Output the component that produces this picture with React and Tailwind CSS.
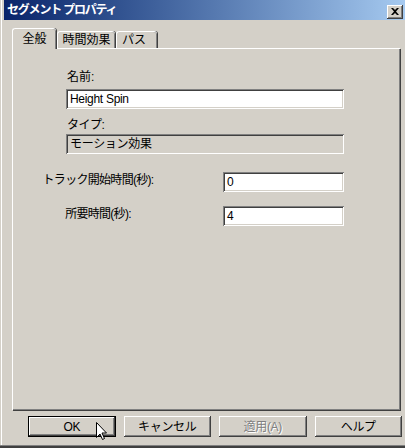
import React from "react";

const sunken =
  "shadow-[inset_1px_1px_0_#808080,inset_-1px_-1px_0_#ffffff,inset_2px_2px_0_#404040,inset_-2px_-2px_0_#d4d0c8]";
const raised =
  "shadow-[inset_-1px_-1px_0_#404040,inset_1px_1px_0_#ffffff,inset_-2px_-2px_0_#808080]";

function Field({ value, disabled, className }) {
  return (
    <div
      className={`h-[20px] ${sunken} ${disabled ? "bg-[#d4d0c8]" : "bg-white"} pl-[4px] flex items-center text-[12px] text-black ${className}`}
    >
      <span className="leading-[14px] tracking-[-0.3px]">{value}</span>
    </div>
  );
}

function Button({ children, def, disabled }) {
  return (
    <div
      className={`w-[88px] h-[21px] flex items-center justify-center text-[12px] ${def ? "border border-black" : ""}`}
    >
      <div className={`w-full h-full flex items-center justify-center ${raised}`}>
        <span
          className={`leading-[14px] tracking-[-0.3px] ${disabled ? "text-[#808080] [text-shadow:1px_1px_0_#ffffff]" : "text-black"}`}
        >
          {children}
        </span>
      </div>
    </div>
  );
}

export default function App() {
  return (
    <div
      className="w-[405px] h-[448px] bg-[#d4d0c8] relative overflow-hidden"
      style={{ fontFamily: '"Liberation Sans", "Noto Sans CJK JP", sans-serif' }}
    >
      <div className="ml-[1px] border-l border-white h-[445px] pl-[2px] flex flex-col">
        {/* Title bar */}
        <div className="h-[20px] bg-gradient-to-r from-[#0a246a] to-[#a6caf0] flex items-center justify-between pl-[3px] pr-[2px]">
          <span className="text-white font-bold text-[12px] leading-[14px] tracking-[-1.2px]">
            セグメント プロパティ
          </span>
          <div className={`w-[16px] h-[14px] bg-[#d4d0c8] ${raised} flex items-center justify-center mt-[3px]`}>
            <svg width="8" height="7" viewBox="0 0 8 7">
              <path d="M0 0h2l2 2 2-2h2L5 3.5 8 7H6L4 5 2 7H0l3-3.5z" fill="#000" />
            </svg>
          </div>
        </div>

        {/* Tabs */}
        <div className="mt-[8px] pl-[8px] pr-[3px] flex flex-col">
          <div className="flex items-end h-[20px] pl-[1px]">
            <div className="relative z-10 w-[44px] h-[21px] -mb-[1px] -ml-[1px] bg-[#d4d0c8] border-l border-t border-white rounded-tl-[3px] rounded-tr-[3px] shadow-[inset_-1px_0_0_#808080,1px_0_0_#404040] flex items-start justify-center pt-[3px] text-[12px] leading-[14px]">
              全般
            </div>
            <div className="w-[58px] h-[17px] ml-[1px] bg-[#d4d0c8] border-l border-t border-white rounded-tl-[3px] rounded-tr-[3px] shadow-[inset_-1px_0_0_#808080,1px_0_0_#404040] flex items-start justify-center pt-[1px] text-[12px] leading-[14px]">
              時間効果
            </div>
            <div className="w-[41px] h-[17px] ml-[1px] bg-[#d4d0c8] border-l border-t border-white rounded-tl-[3px] rounded-tr-[3px] shadow-[inset_-1px_0_0_#808080,1px_0_0_#404040] flex items-start pl-[5px] pt-[1px] text-[12px] leading-[14px]">
              パス
            </div>
          </div>

          {/* Panel */}
          <div className="w-[388px] h-[362px] border-l border-t border-white shadow-[inset_-1px_-1px_0_#808080,1px_1px_0_#404040] flex flex-col pl-[53px] text-[12px] text-black">
            <div className="mt-[21px] pl-[1px] leading-[14px]">名前:</div>
            <Field value="Height Spin" className="w-[278px] mt-[5px]" />
            <div className="mt-[9px] pl-[1px] leading-[14px] tracking-[-0.5px]">タイプ:</div>
            <Field value="モーション効果" disabled className="w-[278px] mt-[2px]" />

            <div className="-ml-[53px] mt-[18px] flex items-start">
              <div className="w-[166px] text-center leading-[14px] pt-[1px] pl-[4px] tracking-[-0.7px]">トラック開始時間(秒):</div>
              <Field value="0" className="w-[121px] ml-[44px]" />
            </div>
            <div className="-ml-[53px] mt-[14px] flex items-start">
              <div className="w-[166px] text-center leading-[14px] pt-[1px] pl-[4px] tracking-[-0.7px]">所要時間(秒):</div>
              <Field value="4" className="w-[121px] ml-[44px]" />
            </div>
          </div>

          {/* Buttons */}
          <div className="mt-[6px] flex pl-[16px] gap-[8px]">
            <Button def>OK</Button>
            <Button>キャンセル</Button>
            <Button disabled>適用(A)</Button>
            <Button>ヘルプ</Button>
          </div>
        </div>
      </div>
      <div className="h-[1px] bg-[#808080]" />
      <div className="h-[2px] bg-[#404040]" />

      {/* Cursor */}
      <svg className="absolute left-[96px] top-[422px]" width="12" height="19" viewBox="0 0 12 19">
        <path
          d="M0.5 0.5 L0.5 15.5 L4 12 L6.5 17.5 L8.5 16.5 L6 11 L10.5 11 Z"
          fill="#ffffff"
          stroke="#000000"
          strokeWidth="1"
          strokeLinejoin="miter"
        />
      </svg>
    </div>
  );
}
